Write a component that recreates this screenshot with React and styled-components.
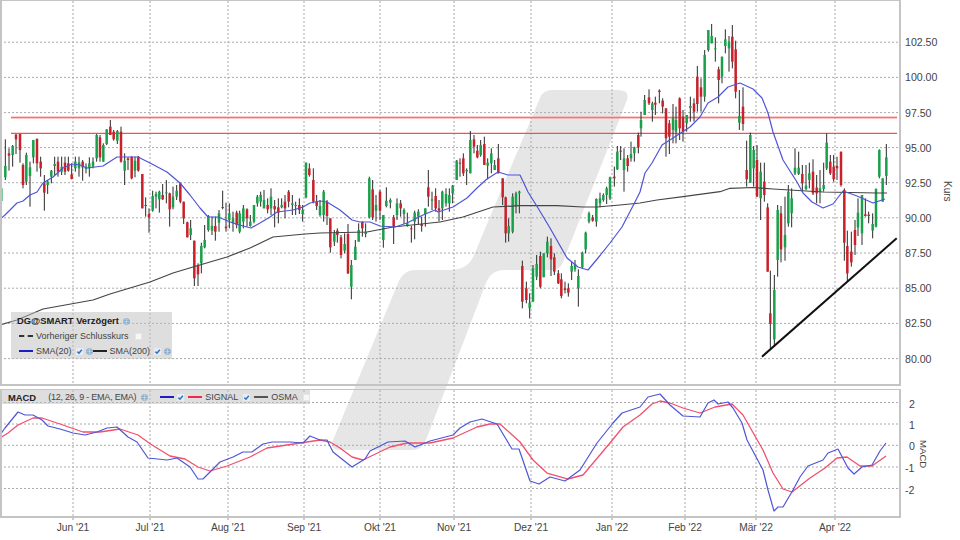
import React from "react";
import styled, { createGlobalStyle } from "styled-components";

const GlobalStyle = createGlobalStyle`
  html, body { margin: 0; padding: 0; background: #fff; }
  body { font-family: "Liberation Sans", Arial, sans-serif; overflow: hidden; }
`;

// candles read off the chart: x, wick top, wick bottom, body top, body bottom, colour
// numbers are 3x crop coordinates, read() moves them back to page pixels
const read = (rows, x0, y0) =>
  rows.trim().split("\n").map((row) => {
    const [x, wt, wb, bt, bb, c] = row.trim().split(" ");
    return {
      x: x0 + x / 3,
      wt: y0 + wt / 3,
      wb: y0 + wb / 3,
      bt: y0 + bt / 3,
      bb: y0 + bb / 3,
      up: c === "g",
    };
  });

const partOne = read(`
4 195 265 205 243 g
16 58 180 138 172 g
27 85 152 100 107 r
38 75 140 78 105 g
48 42 102 44 58 r
60 42 128 42 90 r
69 130 205 135 195 r
79 98 195 105 185 g
90 125 260 142 168 g
100 60 130 60 112 g
111 55 155 57 130 r
122 110 170 125 145 r
133 165 272 190 218 r
143 180 222 185 195 g
154 150 190 152 170 g
164 110 165 132 138 g
174 110 170 125 155 r
185 110 165 140 155 g
195 110 165 128 155 r
205 110 155 130 152 r
215 130 178 163 177 r
226 110 155 125 145 g
237 110 170 127 145 g
248 120 182 125 142 r
258 130 160 140 147 g
268 112 170 130 145 g
279 112 145 125 140 g
290 42 125 45 115 g
300 45 125 52 112 r
310 70 125 75 125 g
320 28 75 28 72 g
331 0 45 20 45 r
341 30 62 35 58 r
352 30 72 33 62 g
363 20 128 35 125 r
374 100 195 122 152 g
384 112 150 115 120 r
395 110 178 110 175 r
405 110 172 122 152 g
415 108 155 110 152 r
427 162 265 162 265 r
437 232 290 255 258 r
447 265 338 282 292 r
458 212 275 228 272 g
468 215 265 222 230 g
478 212 278 215 238 g
488 192 240 225 238 r
499 180 250 217 219 g
509 218 320 220 268 r
519 200 268 230 262 g
530 195 240 212 230 g
541 188 250 190 245 r
551 245 312 245 295 r
562 305 352 307 352 r
572 300 360 325 345 g
583 362 498 362 475 r
594 430 498 435 463 r
604 368 460 378 430 g
614 315 385 360 382 g
625 285 335 288 330 g
636 290 345 318 332 g
646 290 362 318 335 r
657 270 335 280 308 g
668 212 268 261 264 r
678 248 335 320 325 r
688 250 325 280 300 g
699 275 335 295 310 g
710 272 325 278 315 r
719 272 340 280 335 g
730 255 325 265 305 g
741 265 320 268 295 r
751 285 320 305 318 g
762 255 310 255 305 g
772 225 260 230 250 g
782 215 260 225 245 g
792 210 265 240 265 g
803 235 280 255 268 r
813 205 285 230 265 g
824 240 322 258 268 r
835 235 310 262 278 r
845 235 265 255 262 g
855 225 295 245 265 r
866 210 262 215 245 r
877 225 285 250 255 g
887 245 285 255 258 g
898 235 282 255 270 r
908 255 305 270 282 g
918 128 235 128 232 g
928 130 170 145 165 r
940 145 250 180 245 r
950 225 270 245 258 r
`, 0, 120);

const partTwo = read(`
0 240 290 258 285 g
11 210 305 215 285 g
21 240 315 245 288 r
31 295 398 295 382 r
43 330 378 340 365 g
52 325 368 332 345 r
63 345 415 352 405 r
74 340 400 372 392 g
84 312 462 342 460 r
94 420 538 435 500 g
106 360 420 380 420 g
116 310 365 330 365 g
127 305 350 305 325 r
137 310 352 335 342 g
148 170 295 175 292 g
158 180 300 208 292 r
168 225 305 255 272 g
180 210 300 215 272 r
190 285 383 285 360 g
199 202 262 242 258 g
211 235 265 240 248 g
221 285 372 292 320 r
231 235 300 250 285 g
242 240 290 250 265 r
252 265 312 270 282 g
262 278 320 310 318 g
274 318 368 325 328 r
284 272 358 278 305 g
295 268 315 275 290 g
305 290 335 312 318 r
316 265 320 265 282 g
325 150 260 202 230 r
336 215 270 238 242 g
347 205 275 228 265 r
357 240 305 265 272 r
367 212 300 215 265 g
378 205 260 222 250 g
388 205 275 225 250 g
398 195 250 197 220 g
410 120 180 122 180 g
420 115 170 128 130 r
430 100 168 115 160 r
440 145 195 150 154 g
451 33 160 60 160 g
462 45 100 58 80 r
472 75 115 92 112 r
482 60 110 75 105 g
493 50 135 72 135 r
503 115 178 128 137 g
514 85 160 100 130 g
524 120 150 135 150 g
535 72 160 115 160 r
548 175 255 175 232 r
557 230 368 232 340 r
566 295 365 318 340 g
578 220 340 230 335 g
588 215 280 220 258 g
598 212 280 215 220 g
607 422 565 438 545 r
619 485 550 505 540 r
629 520 595 548 565 g
639 435 545 445 545 g
650 405 480 432 470 g
661 395 505 408 500 r
671 400 470 400 472 g
682 350 412 365 400 g
693 355 468 378 418 r
703 400 465 412 455 r
715 450 492 460 490 r
724 460 535 478 528 r
735 485 520 505 510 r
745 490 530 505 518 r
755 425 480 438 455 g
765 420 455 432 448 g
775 448 560 468 505 g
787 395 445 398 442 g
797 335 400 338 388 g
807 275 310 280 305 g
818 285 305 292 302 r
829 235 320 237 305 g
840 218 262 235 250 g
850 220 245 225 240 g
860 200 252 205 225 g
870 170 240 172 235 g
883 140 200 170 175 r
892 78 150 95 148 g
902 78 120 92 95 r
912 85 215 115 150 g
923 105 155 115 138 r
933 65 125 102 115 g
943 80 125 82 100 g
955 38 100 45 82 r
`, 320, 120);

const partThree = read(`
3 335 410 360 385 g
14 285 345 300 345 g
27 268 315 292 310 r
37 305 365 310 330 g
46 290 345 308 314 r
58 268 310 272 276 r
68 295 340 302 320 r
78 325 470 325 415 r
88 360 462 370 410 r
99 312 430 355 390 g
108 320 430 360 395 g
119 292 420 295 385 r
129 330 425 350 395 r
140 345 395 345 370 g
151 290 365 318 324 g
162 295 365 310 335 r
172 198 335 230 312 r
183 235 335 262 290 r
194 150 305 165 290 g
205 90 155 90 150 g
215 72 130 108 130 g
226 112 185 145 148 g
236 200 310 208 240 r
246 170 250 170 230 g
256 88 160 118 138 g
267 108 215 125 145 g
277 75 205 110 185 r
287 122 295 148 275 r
298 270 390 348 368 g
309 262 392 320 372 r
320 422 560 510 538 r
331 398 548 405 548 g
341 438 560 450 505 g
351 435 590 480 590 r
362 488 660 515 595 g
373 488 605 545 585 r
383 610 815 622 815 r
391 812 1045 940 972 r
403 825 1040 870 1018 g
413 615 830 630 780 g
423 618 787 640 748 r
435 590 782 705 742 g
445 555 680 575 670 g
455 565 682 595 640 g
465 445 525 503 520 g
476 455 525 503 522 g
487 495 575 522 550 r
498 495 570 557 567 g
508 488 565 520 540 g
519 478 585 515 580 r
530 525 610 563 580 r
540 510 610 565 575 g
551 488 575 555 567 g
560 400 510 428 505 g
571 465 525 485 520 r
581 465 545 500 538 r
591 470 540 498 505 r
603 455 560 455 555 r
613 565 782 570 728 r
622 692 845 738 820 r
634 695 800 755 787 r
645 660 765 690 735 r
654 595 708 638 682 g
666 585 735 585 700 g
676 595 650 643 648 r
686 635 670 644 648 r
698 640 715 672 692 g
708 565 682 567 680 g
718 448 535 450 530 g
728 535 605 535 605 g
739 432 555 472 528 g
`, 640, 0);

const candles = [...partOne, ...partTwo, ...partThree];

const sma20 = "0,219 5,215 17,203 23,201 30,195 37,192 43,183 53,177 63,168 72,164 80,165 87,168 103,166 117,157 138,157 150,163 167,172 180,183 190,195 200,208 208,217 218,217 233,223 243,226 251,228 260,223 270,217 277,212 293,210 303,207 310,203 320,201 327,202 340,210 352,220 360,222 370,222 380,226 395,227 407,223 423,215 435,210 438,212 453,207 467,198 477,188 487,179 498,172 508,175 520,175 528,192 538,208 550,228 567,258 578,267 588,270 598,258 610,243 622,227 635,202 640,192 645,173 652,163 662,145 673,138 690,127 700,117 708,103 718,97 728,87 740,83 753,89 762,98 768,113 773,132 783,160 797,182 803,193 812,202 823,208 833,204 843,191 857,196 873,203 885,199";
const sma200 = "0,325 17,320 43,309 93,300 110,294 150,282 173,273 193,267 227,257 250,248 273,237 305,234 320,233 367,232 393,227 440,222 463,217 493,207 520,205.7 557,205.7 583,207 597,207 620,205 640,203 657,200 683,196.7 720,191.7 730,188.3 753,187.5 773,189 823,192 877,193 887,193";
const macdLine = "0,435 5,428 18,412 25,415 33,415 42,420 48,426 60,429 73,433 85,435 97,432 107,428 117,427 128,437 137,442 148,458 167,460 177,458 190,467 198,479 203,479 220,462 233,457 243,452 252,452 263,444 272,442 290,442 303,443 310,436 320,440 327,440 333,452 352,467 365,459 370,451 388,442 405,441 415,447 430,441 453,435 460,428 470,422 482,419 497,424 512,449 519,449 530,481 539,484 550,477 565,481 580,470 597,443 613,423 622,413 640,407 648,397 660,394 670,405 683,416 700,417 708,403 714,400 718,404 728,402 733,408 742,423 747,440 763,470 768,490 774,511 778,507 783,507 793,490 800,477 808,466 823,460 828,453 838,449 848,468 854,474 862,467 872,465 880,451 886,443";
const signalLine = "0,438 8,433 18,425 33,418 42,418 60,424 83,432 100,432 120,429 138,435 152,445 170,456 185,459 198,467 210,471 227,466 250,457 267,448 287,445 307,442 320,440 330,442 340,448 352,457 363,460 390,447 407,443 430,443 453,438 477,427 490,424 500,424 520,442 533,460 547,473 568,479 583,475 610,443 623,427 640,415 652,404 660,401 670,403 683,408 700,413 715,407 732,404 743,415 763,450 773,473 783,489 792,492 810,478 825,468 837,458 847,457 860,466 872,466 886,456";

const monthX = [
  { x: 73, label: "Jun '21" },
  { x: 150, label: "Jul '21" },
  { x: 228, label: "Aug '21" },
  { x: 304, label: "Sep '21" },
  { x: 380, label: "Okt '21" },
  { x: 454, label: "Nov '21" },
  { x: 531, label: "Dez '21" },
  { x: 612, label: "Jan '22" },
  { x: 685, label: "Feb '22" },
  { x: 756, label: "Mär '22" },
  { x: 835, label: "Apr '22" },
];

const priceTicks = [
  { y: 42.2, label: "102.50" },
  { y: 77.4, label: "100.00" },
  { y: 112.6, label: "97.50" },
  { y: 147.6, label: "95.00" },
  { y: 182.7, label: "92.50" },
  { y: 217.8, label: "90.00" },
  { y: 253, label: "87.50" },
  { y: 288.2, label: "85.00" },
  { y: 323.4, label: "82.50" },
  { y: 358.6, label: "80.00" },
];

const macdTicks = [
  { y: 402.5, label: "2" },
  { y: 424, label: "1" },
  { y: 445.3, label: "0" },
  { y: 467, label: "-1" },
  { y: 488.5, label: "-2" },
];

const Page = styled.div`
  position: relative;
  width: 960px;
  height: 540px;
  overflow: hidden;
  background: #fff;
  color: #444;
`;

const Watermark = styled.svg`
  position: absolute;
  left: 0;
  top: 0;
  z-index: 0;
`;

const Rows = styled.div`
  position: relative;
  z-index: 1;
  display: flex;
  flex-direction: column;
`;

const ChartRow = styled.div`
  display: flex;
  margin-top: ${(p) => p.$gap || 0}px;
`;

const Panel = styled.div`
  position: relative;
  box-sizing: border-box;
  width: 901px;
  height: ${(p) => p.$height}px;
  border: 2px solid #c4c4c4;
  border-top-width: ${(p) => p.$top}px;
  flex: none;
`;

const ChartSvg = styled.svg`
  display: block;
`;

const Legend = styled.div`
  position: absolute;
  left: 9px;
  top: 311px;
  width: 161px;
  height: 47px;
  box-sizing: border-box;
  padding: 3px 0 0 6px;
  background: rgba(190, 190, 190, 0.5);
  display: flex;
  flex-direction: column;
  gap: 3px;
  font-size: 9px;
  line-height: 12px;
`;

const LegendRow = styled.div`
  display: flex;
  align-items: center;
  height: 12px;
  white-space: nowrap;
`;

const LegendTitle = styled.span`
  flex: none;
  font-size: 9.4px;
  font-weight: bold;
  color: #222;
  margin-right: ${(p) => p.$gap}px;
`;

const LegendName = styled.span`
  flex: none;
  letter-spacing: ${(p) => p.$tight || 0}px;
  margin-right: ${(p) => p.$gap}px;
`;

const LineKey = styled.i`
  display: block;
  flex: none;
  width: 14px;
  height: 0;
  border-top: 2px ${(p) => p.$style || "solid"} ${(p) => p.$color};
  margin-left: ${(p) => p.$left || 0}px;
  margin-right: ${(p) => p.$gap}px;
`;

const MacdBar = styled.div`
  position: absolute;
  left: 0;
  top: 0;
  width: 308px;
  height: 14px;
  padding-left: 6px;
  box-sizing: border-box;
  display: flex;
  align-items: center;
  background: rgba(190, 190, 190, 0.5);
  font-size: 9px;
  white-space: nowrap;
`;

const Swatch = styled.svg`
  display: block;
  flex: none;
  margin-right: ${(p) => p.$gap}px;
`;

const DateRow = styled.svg`
  display: block;
`;

const Globe = ({ gap = 0 }) => (
  <Swatch $gap={gap} width="7" height="7" viewBox="0 0 7 7">
    <circle cx="3.5" cy="3.5" r="3.3" fill="#7fa3c4" />
    <path d="M0.5 3.5h6M3.5 0.5v6M1.2 1.8h4.6M1.2 5.2h4.6" stroke="#d5e2ec" strokeWidth="0.6" />
  </Swatch>
);

const Check = ({ gap = 0 }) => (
  <Swatch $gap={gap} width="7" height="7" viewBox="0 0 7 7">
    <rect width="7" height="7" fill="#ececf0" />
    <path d="M1.4 3.6 L3 5.2 L5.8 1.8" fill="none" stroke="#2377c9" strokeWidth="1.5" />
  </Swatch>
);

const EmptyBox = () => (
  <Swatch $gap={0} width="7" height="7" viewBox="0 0 7 7">
    <rect x="0.5" y="0.5" width="6" height="6" fill="#f7f7f7" stroke="#e6e6e6" />
  </Swatch>
);

const Grid = ({ ticks, top, bottom }) => (
  <g stroke="#aaa" strokeWidth="1" strokeDasharray="2 2">
    {ticks.map((t) => (
      <line key={t.y} x1="0" x2="900" y1={t.y} y2={t.y} />
    ))}
    {monthX.map((m) => (
      <line key={m.x} x1={m.x} x2={m.x} y1={top} y2={bottom} />
    ))}
  </g>
);

const App = () => (
  <Page>
    <GlobalStyle />
    <Watermark width="960" height="540" viewBox="0 0 960 540">
      <path
        d="M552 90 L618 90 Q630 90 627 100 L563 262 Q560 270 552 270 L505 270 Q491 270 486 283 L426 440 Q422 450 412 450 L340 450 Q329 450 333 440 L398 283 Q403 270 416 270 L450 270 Q468 270 474 255 L540 98 Q543 90 552 90 Z"
        fill="#e6e6e6"
      />
    </Watermark>
    <Rows>
      <ChartRow>
        <Panel $height={386} $top={1}>
          <ChartSvg width="897" height="383" viewBox="2 1 897 383">
            <Grid ticks={priceTicks} top={1} bottom={384} />
            <line x1="11" x2="897" y1="117.6" y2="117.6" stroke="#ff9a9a" strokeWidth="2" />
            <line x1="11" x2="897" y1="117.6" y2="117.6" stroke="#f25b5b" strokeWidth="0.7" />
            <line x1="11" x2="897" y1="133.4" y2="133.4" stroke="#f05050" strokeWidth="1.1" />
            {candles.map((c) => (
              <line key={c.x} x1={c.x} x2={c.x} y1={c.wt} y2={c.wb} stroke="#2a2a2a" strokeWidth="1" />
            ))}
            {candles.map((c) => (
              <rect
                key={c.x}
                x={c.x - 1.25}
                y={c.bt}
                width="2.5"
                height={Math.max(c.bb - c.bt, 1)}
                fill={c.up ? "#19a04b" : "#c9202a"}
              />
            ))}
            <polyline points={sma200} fill="none" stroke="#444" strokeWidth="1.2" strokeLinejoin="round" />
            <polyline points={sma20} fill="none" stroke="#4f55d6" strokeWidth="1.2" strokeLinejoin="round" />
            <line x1="762" y1="356.7" x2="896.7" y2="238.3" stroke="#111" strokeWidth="2" />
          </ChartSvg>
          <Legend>
            <LegendRow>
              <LegendTitle $gap={4}>DG@SMART Verzögert</LegendTitle>
              <Globe />
            </LegendRow>
            <LegendRow>
              <LineKey $color="#333" $style="dashed" $left={2} $gap={3} />
              <LegendName $gap={6}>Vorheriger Schlusskurs</LegendName>
              <EmptyBox />
            </LegendRow>
            <LegendRow>
              <LineKey $color="#1d1dc4" $left={2} $gap={3} />
              <LegendName $gap={4}>SMA(20)</LegendName>
              <Check gap={3} />
              <Globe gap={0} />
              <LineKey $color="#222" $gap={3} />
              <LegendName $gap={4}>SMA(200)</LegendName>
              <Check gap={3} />
              <Globe />
            </LegendRow>
          </Legend>
        </Panel>
        <svg width="59" height="386" viewBox="901 0 59 386">
          {priceTicks.map((t) => (
            <text key={t.y} x="905" y={t.y + 4} fontSize="10.6" fill="#444" fontFamily="Liberation Sans">
              {t.label}
            </text>
          ))}
          <text transform="translate(943.5 181) rotate(90)" fontSize="10" fill="#444" fontFamily="Liberation Sans">
            Kurs
          </text>
        </svg>
      </ChartRow>
      <ChartRow $gap={3}>
        <Panel $height={129} $top={1}>
          <ChartSvg width="897" height="126" viewBox="2 390 897 126">
            <Grid ticks={macdTicks} top={390} bottom={516} />
            <polyline points={signalLine} fill="none" stroke="#f2506e" strokeWidth="1.3" strokeLinejoin="round" />
            <polyline points={macdLine} fill="none" stroke="#4f55d6" strokeWidth="1.2" strokeLinejoin="round" />
          </ChartSvg>
          <MacdBar>
            <LegendTitle $gap={12}>MACD</LegendTitle>
            <LegendName $gap={5} $tight={-0.22}>(12, 26, 9 - EMA, EMA)</LegendName>
            <Globe gap={12} />
            <LineKey $color="#1d1dc4" $gap={3} />
            <Check gap={4} />
            <LineKey $color="#f5254c" $gap={3} />
            <LegendName $gap={5}>SIGNAL</LegendName>
            <Check gap={4} />
            <LineKey $color="#555" $gap={3} />
            <LegendName $gap={5}>OSMA</LegendName>
            <EmptyBox />
          </MacdBar>
        </Panel>
        <svg width="59" height="129" viewBox="901 388 59 129">
          {macdTicks.map((t) => (
            <text key={t.y} x={t.label.length > 1 ? 905 : 909} y={t.y + 4} fontSize="10.6" fill="#444" fontFamily="Liberation Sans">
              {t.label}
            </text>
          ))}
          <text transform="translate(920 439) rotate(90)" fontSize="9.6" fill="#444" fontFamily="Liberation Sans">
            MACD
          </text>
        </svg>
      </ChartRow>
      <DateRow width="960" height="22" viewBox="0 518 960 22">
        {monthX.map((m) => (
          <g key={m.x}>
            <line x1={m.x} x2={m.x} y1="516" y2="520" stroke="#999" />
            <text x={m.x} y="530.5" textAnchor="middle" fontSize="10.2" fill="#444" fontFamily="Liberation Sans">
              {m.label}
            </text>
          </g>
        ))}
      </DateRow>
    </Rows>
  </Page>
);

export default App;
